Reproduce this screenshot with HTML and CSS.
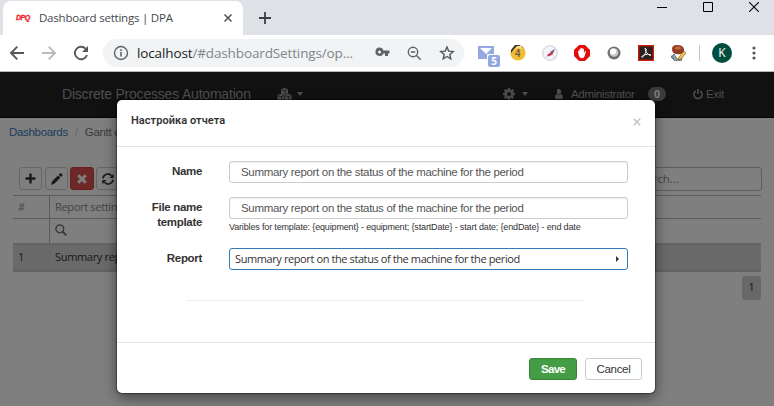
FILE: index.html
```html
<!DOCTYPE html>
<html lang="en">
<head>
<meta charset="utf-8">
<title>Dashboard settings | DPA</title>
<link rel="stylesheet" href="styles.css">
</head>
<body>
<div class="browser">
  <div class="tabstrip">
    <div class="tab">
      <span class="favicon">DPQ</span>
      <span class="tab-title">Dashboard settings | DPA</span>
      <svg class="tab-close" width="8" height="8" viewBox="0 0 8 8"><path d="M.5.5l7 7M7.5.5l-7 7" stroke="#4d5156" stroke-width="1.5"/></svg>
    </div>
    <svg class="new-tab" width="12" height="12" viewBox="0 0 12 12"><path d="M6 0v12M0 6h12" stroke="#3c4043" stroke-width="1.8"/></svg>
    <div class="window-buttons">
      <svg width="10" height="10" viewBox="0 0 10 10"><path d="M0 5.5h10" stroke="#000"/></svg>
      <svg width="10" height="10" viewBox="0 0 10 10"><path d="M.5.5h9v9h-9z" stroke="#000" fill="none"/></svg>
      <svg width="10" height="10" viewBox="0 0 10 10"><path d="M0 0l10 10M10 0L0 10" stroke="#000" stroke-width="1.1"/></svg>
    </div>
  </div>
  <div class="toolbar">
    <div class="nav-buttons">
      <svg width="16" height="16" viewBox="0 0 16 16" fill="none" stroke="#54575b" stroke-width="1.9"><path d="M15 8H2M8.3 1.6L2 8l6.300 6.400"/></svg>
      <svg width="16" height="16" viewBox="0 0 16 16" fill="none" stroke="#b9bbbe" stroke-width="1.9"><path d="M1 8h13M7.700 1.600L14 8l-6.300 6.400"/></svg>
      <svg width="16" height="16" viewBox="0 0 16 16" fill="none" stroke="#54575b" stroke-width="1.900"><path d="M14 10A6.200 6.200 0 1 1 12.600 3.700"/><path d="M15 1v6H9z" fill="#54575b" stroke="none"/></svg>
    </div>
    <div class="omnibox">
      <svg class="info" width="16" height="16" viewBox="0 0 16 16"><circle cx="8" cy="8" r="6.500" fill="none" stroke="#5f6368" stroke-width="1.400"/><path d="M8 7v4.500M8 4.300V6" stroke="#5f6368" stroke-width="1.600"/></svg>
      <span class="url">localhost<span>/#dashboardSettings/op...</span></span>
      <svg class="key" width="15" height="10" viewBox="0 0 15 10"><path fill="#5f6368" fill-rule="evenodd" d="M4.500.5a4.200 4.200 0 0 1 4 2.900H14.500v3H13V9h-3V6.400H8.500A4.200 4.200 0 1 1 4.500.5zm0 2.900a1.500 1.500 0 1 0 0 3 1.500 1.500 0 0 0 0-3z"/></svg>
      <svg class="zoom" width="15" height="15" viewBox="0 0 15 15" fill="none" stroke="#5f6368" stroke-width="1.400"><circle cx="6" cy="6" r="4.700"/><path d="M3.800 6h4.400M9.500 9.500l4.200 4.200"/></svg>
      <svg class="star" width="16" height="16" viewBox="0 0 16 16"><path d="M8 2l1.700 4.100 4.500.4-3.400 2.900 1 4.400L8 11.500l-3.800 2.300 1-4.400L1.800 6.500l4.500-.4z" fill="none" stroke="#54575b" stroke-width="1.400"/></svg>
    </div>
    <div class="extensions">
      <svg width="24" height="24" viewBox="0 0 24 24"><path fill="#94a9df" d="M0 5h16v13H0z"/><path fill="#fff" d="M2 7l6 6 6-6z"/><rect x="9" y="13" width="14" height="12" fill="#fff"/><rect x="10" y="14" width="12" height="12" rx="2" fill="#91a8e0"/></svg>
      <svg width="16" height="16" viewBox="0 0 16 16"><circle cx="8" cy="8" r="7.600" fill="#f3bd32"/><path d="M1 5L5 0h6L5 3 1 8z" fill="#39362b"/><path d="M12 1l3 4-4-3z" fill="#555"/><path d="M2 7l4-4 8 1-3-3H7z" fill="#ffdc74"/></svg>
      <svg width="16" height="16" viewBox="0 0 16 16"><circle cx="8" cy="8" r="7.300" fill="#f4f4fa" stroke="#c8ccda"/><path d="M10 15l1-3 4-1-1 3z" fill="#dde1e8"/><path d="M4 12.500l2-3.500 2-1 5-4-2.500 5.500-2 1-1.500 1-1-1z" fill="#c83b4e"/><path d="M8 7l5-3-3 4z" fill="#665c91"/></svg>
      <svg width="16" height="16" viewBox="0 0 16 16"><path fill="#e30b0b" d="M5 0h6l5 5v6l-5 5H5l-5-5V5z"/><path fill="#fff" d="M4.500 9L4 6q1-1 1.500.5V4q.9-1 1.400 0v-.8q.8-1 1.500 0V4q1-1 1.500.2v4l1-2q1.300-.5 1 .6L10.700 11q-.7 2.300-2.900 2.300Q5 13 4.500 9z"/></svg>
      <svg width="16" height="16" viewBox="0 0 16 16"><circle cx="8" cy="8" r="6.500" fill="#707070"/><circle cx="8" cy="7.500" r="4.300" fill="#ccc"/><circle cx="7" cy="6.500" r="3" fill="#fff"/></svg>
      <svg width="16" height="16" viewBox="0 0 16 16"><path fill="#29201f" stroke="#c61c0d" stroke-width="1.400" d="M.7.7h14.600v14.600H.7z"/><path d="M7 3q2 0 1 4-1.500 4-4 5.500-2-.5 2-2.500 4-1.500 7 0-.5 1-3-.8Q7 7 7 3z" fill="none" stroke="#f1e9e8"/></svg>
      <svg width="17" height="16" viewBox="0 0 17 16"><path d="M1 12l3-3 3 5 5-1-1 3-3-1-3 1zM2 10l2 5" fill="#8da8b9" stroke="#6e7679"/><path d="M2 4q0-4 5-4 6 0 7 4v3q-3 3-7 2-5 0-5-5z" fill="#933b25"/><path d="M4 3q4-3 8 0Q8 6 4 3z" fill="#c66a42"/><path d="M14 6l2 2-5 6-3 1 1-3z" fill="#f3c73e" stroke="#65542f" stroke-width=".6"/></svg>
    </div>
    <span class="divider"></span>
    <span class="avatar">K</span>
    <svg class="menu" width="4" height="14" viewBox="0 0 4 14" fill="#54575b"><circle cx="2" cy="2" r="1.600"/><circle cx="2" cy="7" r="1.600"/><circle cx="2" cy="12" r="1.600"/></svg>
  </div>
  <span class="mail-count">5</span>
  <span class="coin-count">4</span>
</div>

<div class="page">
  <nav class="navbar">
    <span class="brand">Discrete Processes Automation</span>
    <span class="cubes">
      <svg width="15" height="13" viewBox="0 0 15 13" fill="#9d9d9d"><path d="M7.500 0L11 1.300v4L7.500 6.800 4 5.300v-4zM4 5.800l3.500 1.300v4.200L4 13 .5 11.300V7.100zM11 5.800l3.500 1.300v4.200L11 13l-3.500-1.700V7.100z"/><path d="M4.800 2L7.500 3l2.700-1M8.300 3.500v2.300M1.300 7.700L4 8.700l2.700-1M4.700 9v2.800M8.300 7.700l2.700 1 2.700-1M11.700 9v2.800M7.500 7.500v4" fill="none" stroke="#222" stroke-width=".8"/></svg>
      <i class="caret"></i>
    </span>
    <span class="gear">
      <svg width="12" height="12" viewBox="0 0 12 12"><path fill="#9d9d9d" fill-rule="evenodd" d="M5 0h2l.3 1.700 1 .4L9.700 1l1.400 1.400-1 1.400.4 1L12 5v2l-1.600.3-.4 1 1.100 1.400-1.400 1.400-1.400-1-1 .4L7 12H5l-.3-1.600-1-.4-1.400 1.100L.9 9.700l1-1.400-.4-1L0 7V5l1.600-.3.4-1L.9 2.300 2.300.9l1.400 1 1-.4zM6 4a2 2 0 1 0 0 4 2 2 0 0 0 0-4z"/></svg>
      <i class="caret"></i>
    </span>
    <svg class="user" width="8" height="10" viewBox="0 0 8 10" fill="#9d9d9d"><path d="M4 0q2.200 0 2.200 2.600T4 5.600 1.800 2.600 4 0zM1.800 5Q4 7.300 6.200 5 8 5.500 8 8.500 8 10 6.500 10h-5Q0 10 0 8.500 0 5.500 1.800 5z"/></svg>
    <span class="admin">Administrator</span>
    <span class="badge">0</span>
    <svg class="power" width="10" height="11" viewBox="0 0 10 11" fill="none" stroke="#9d9d9d" stroke-width="1.500"><path d="M2.800 2a4.100 4.100 0 1 0 4.400 0M5 0v5"/></svg>
    <span class="exit">Exit</span>
  </nav>
  <div class="breadcrumb"><a>Dashboards</a><i>/</i><span>Gantt chart</span></div>
  <div class="actions">
    <span class="action"><svg width="11" height="11" viewBox="0 0 11 11"><path d="M5.500.5v10M.5 5.500h10" stroke="#333" stroke-width="2.400"/></svg></span>
    <span class="action"><svg width="12" height="12" viewBox="0 0 12 12" fill="#333"><path d="M8.800.5q1-.8 2 .2 1.200 1.100.3 2.200L10 4 7.700 1.700zM7 2.400L9.300 4.700 3.600 10.600 0 12l1.200-3.800z"/></svg></span>
    <span class="action danger"><svg width="10" height="10" viewBox="0 0 10 10"><path d="M1.200 1.200l7.600 7.600M8.800 1.200L1.200 8.800" stroke="#fff" stroke-width="3"/></svg></span>
    <span class="action last"><svg width="12" height="12" viewBox="0 0 12 12" fill="none" stroke="#333" stroke-width="1.700"><path d="M1 5.300a4.800 4.800 0 0 1 8.500-2.500M11 6.700A4.800 4.800 0 0 1 2.500 9.200"/><path d="M11.700.7v4.200H7.500zM.3 11.300V7.100h4.200z" fill="#333" stroke="none"/></svg></span>
    <span class="search">Search...</span>
  </div>
  <div class="grid">
    <div class="row head"><span class="num">#</span><span class="cell">Report settings</span></div>
    <div class="row filter"><span class="num"></span><span class="cell"><svg width="12" height="12" viewBox="0 0 12 12" fill="none" stroke="#777"><circle cx="4.800" cy="4.800" r="3.900" stroke-width="1.500"/><path d="M7.700 7.700l3.600 3.600" stroke-width="2"/></svg></span></div>
    <div class="row data"><span class="num">1</span><span class="cell">Summary report</span></div>
  </div>
  <div class="pager"><span>1</span></div>
</div>

<div class="backdrop"></div>

<div class="modal">
  <div class="modal-head"><b>Настройка отчета</b><svg width="8" height="8" viewBox="0 0 8 8"><path d="M.8.8l6.400 6.400M7.200.8L.8 7.200" stroke="#c4c4c4" stroke-width="1.600"/></svg></div>
  <div class="modal-body">
    <div class="field"><label>Name</label><div class="input">Summary report on the status of the machine for the period</div></div>
    <div class="field file"><label>File name<br>template</label><div class="control"><div class="input">Summary report on the status of the machine for the period</div><p class="hint">Varibles for template: {equipment} - equipment; {startDate} - start date; {endDate} - end date</p></div></div>
    <div class="field"><label>Report</label><div class="input select"><span>Summary report on the status of the machine for the period</span><i></i></div></div>
    <hr>
  </div>
  <div class="modal-foot"><span class="btn save">Save</span><span class="btn">Cancel</span></div>
</div>
</body>
</html>
```
FILE: styles.css
```css
* { box-sizing: border-box; }
body { margin: 0; width: 774px; height: 406px; overflow: hidden; background: #fff; font: 11.5px/16px "Liberation Sans", Arial, sans-serif; letter-spacing: -.32px; color: #333; position: relative; }
svg { display: block; flex: none; }
span, b, p, label { white-space: nowrap; }

.browser { height: 72px; position: relative; font-family: "Open Sans", "Noto Sans", sans-serif; letter-spacing: 0; }
.tabstrip { height: 35px; background: #dee1e6; display: flex; align-items: flex-start; }
.tab { width: 240px; height: 34px; margin: 1px 0 0 3px; padding: 0 11px 0 13px; background: #fff; border-radius: 8px 8px 0 0; display: flex; align-items: center; }
.favicon { width: 15px; margin-right: 8px; color: #ee1c25; font: italic bold 7px/8px "Liberation Sans", sans-serif; letter-spacing: -.5px; -webkit-text-stroke: .3px #ee1c25; }
.tab-title { font-size: 11.5px; letter-spacing: -.22px; color: #45494d; flex: 1; }
.new-tab { margin: 12px 0 0 16px; }
.window-buttons { margin: 2px 15px 0 auto; display: flex; gap: 36px; }
.toolbar { height: 37px; background: #fff; border-bottom: 1px solid #b5b7b8; display: flex; align-items: center; }
.nav-buttons { display: flex; gap: 16px; margin-left: 9px; }
.omnibox { width: 361px; height: 28px; margin-left: 14px; border-radius: 14px; background: #f1f3f4; display: flex; align-items: center; padding-left: 10px; }
.url { margin-left: 8px; flex: none; width: 235px; font-size: 13.5px; letter-spacing: -.13px; color: #202124; }
.url span { color: #80868b; }
.key { margin: 0 0 2px 3px; }
.zoom { margin-left: 17px; }
.star { margin-left: 17px; }
.extensions { display: flex; align-items: center; gap: 16px; margin-left: 14px; }
.extensions svg:first-child { margin: 0 -8px 0 0; overflow: visible; }
.divider { width: 1px; height: 16px; background: #c5c8cb; margin-left: 12px; }
.avatar { width: 20px; height: 20px; border-radius: 50%; background: #004d40; color: #fff; font-size: 12px; line-height: 20px; text-align: center; margin-left: 12px; }
.menu { margin-left: 20px; }
.mail-count, .coin-count { position: absolute; font-weight: bold; font-size: 10px; line-height: 12px; text-align: center; }
.mail-count { left: 488px; top: 55px; width: 12px; color: #fff; }
.coin-count { left: 511px; top: 47px; width: 13px; color: #555; font-weight: 600; }

.page { height: 334px; }
.navbar { height: 46px; background: #222; border-bottom: 1px solid #080808; color: #9d9d9d; display: flex; align-items: center; padding: 0 0 1px 62px; }
.brand { font-size: 14px; width: 215px; letter-spacing: -.2px; }
.cubes, .gear { display: flex; align-items: center; gap: 5px; }
.cubes { width: 226px; }
.gear { width: 52px; gap: 7px; }
.caret { border: 3.500px solid transparent; border-top: 4px solid #9d9d9d; border-bottom: 0; }
.admin { margin-left: 8px; width: 77px; }
.badge { width: 18px; height: 14px; border-radius: 8px; background: #777; color: #fff; font-weight: bold; font-size: 11px; line-height: 14px; text-align: center; }
.power { margin: 0 3px 0 27px; }
.breadcrumb { display: flex; height: 49px; padding: 6px 0 0 9px; color: #777; }
.breadcrumb a { color: #337ab7; }
.breadcrumb i { width: 17px; text-align: center; font-style: normal; color: #ccc; }
.actions { height: 28px; display: flex; padding-left: 19px; gap: 3px; }
.action { width: 23px; height: 23px; border: 1px solid #ccc; border-radius: 3px; display: flex; align-items: center; justify-content: center; }
.action.danger { width: 24px; background: #d9534f; border-color: #d43f3a; margin-left: -1px; }
.action.last { margin-left: -1px; }
.search { width: 140px; height: 24px; border: 1px solid #bbb; border-radius: 3px; margin: 0 12px 0 auto; padding: 3px 11px; font-family: "Open Sans", sans-serif; letter-spacing: -.1px; color: #888; }
.grid { margin: 0 13px; font-family: "Open Sans", sans-serif; font-size: 11px; }
.row { display: flex; border-top: 1px solid #b8b8b8; height: 23px; color: #888; }
.row.filter { height: 25px; }
.row.data { height: 29px; background: #d4d4d4; border-top: 2px solid #c8c8c8; border-bottom: 3px solid #c8c8c8; color: #333; }
.num { width: 37px; border-right: 1px solid #b8b8b8; padding: 3px 5px; }
.data .num { padding-top: 4px; border-color: #ccc; }
.cell { padding: 3px 5px; }
.data .cell { padding-top: 4px; }
.filter .cell { padding-top: 5px; }
.pager { display: flex; justify-content: flex-end; padding: 4px 13px; }
.pager span { width: 19px; height: 24px; background: #d0d0d0; border-radius: 3px; text-align: center; line-height: 22px; font-family: "Open Sans", sans-serif; }

.backdrop { position: absolute; inset: 72px 0 0; background: rgba(0, 0, 0, .5); }
.modal { position: absolute; left: 117px; top: 100px; width: 538px; height: 293px; background: #fff; border-radius: 5px; box-shadow: 0 4px 14px rgba(0, 0, 0, .5), 0 0 1px 1px rgba(0, 0, 0, .35); }
.modal-head { height: 47px; border-bottom: 1px solid #e5e5e5; display: flex; justify-content: space-between; padding: 12px 14px 0; }
.modal-head b { font: 600 11px/16px Roboto, sans-serif; letter-spacing: .05px; padding-top: 1px; }
.modal-head svg { margin-top: 6px; }
.modal-body { height: 196px; padding: 14px 27px 0 0; border-bottom: 1px solid #e5e5e5; }
.field { display: flex; height: 36px; }
.field.file { height: 51px; }
label { width: 85px; margin-right: 27px; padding-top: 3px; line-height: 15px; font-weight: bold; text-align: right; }
.input { width: 399px; height: 22px; border: 1px solid #ccc; border-radius: 3px; padding: 0 11px; line-height: 20px; color: #555; box-shadow: inset 0 1px 1px rgba(0, 0, 0, .075); }
.hint { margin: 1px 0 0; font-size: 9px; line-height: 14px; letter-spacing: -.155px; }
.select { border-color: #337ab7; box-shadow: none; color: #333; padding: 0 8px 0 5px; display: flex; justify-content: space-between; align-items: center; font-family: "Open Sans", sans-serif; font-size: 11px; letter-spacing: -.4px; }
.select i { border: 3px solid transparent; border-left: 3px solid #333; border-right: 0; }
hr { width: 399px; border: 0; border-top: 1px solid #eee; margin: 16px 0 0 69px; }
.modal-foot { display: flex; justify-content: flex-end; padding: 15px 13px 0; gap: 8px; }
.btn { height: 22px; width: 57px; border: 1px solid #ccc; border-radius: 3px; line-height: 20px; text-align: center; }
.save { width: 48px; background: #449d44; border-color: #398439; color: #fff; font-weight: bold; letter-spacing: -.7px; }
```
